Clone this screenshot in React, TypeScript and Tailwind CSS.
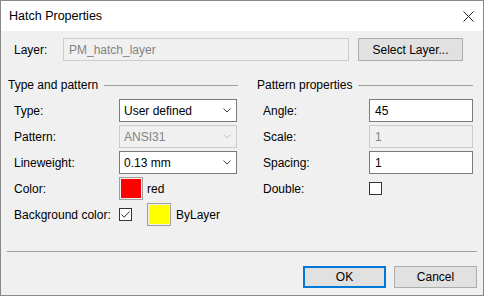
import React from 'react';

const font = { fontFamily: '"Liberation Sans", Arial, sans-serif' };

function Chevron({ disabled }: { disabled?: boolean }) {
  return (
    <svg width="8" height="5" viewBox="0 0 8 5" className="shrink-0">
      <path d="M0.5 0.5 L4 4 L7.5 0.5" fill="none" stroke={disabled ? '#c4c4c4' : '#3c3c3c'} strokeWidth="1" />
    </svg>
  );
}

function Select({ value, disabled }: { value: string; disabled?: boolean }) {
  return (
    <div
      className={`w-[118px] h-[23px] flex items-center justify-between pl-[4px] pr-[5px] border ${
        disabled ? 'border-[#cccccc] bg-[#f0f0f0] text-[#838383]' : 'border-[#7a7a7a] bg-white text-black'
      }`}
    >
      <span>{value}</span>
      <Chevron disabled={disabled} />
    </div>
  );
}

function TextBox({ value, disabled }: { value: string; disabled?: boolean }) {
  return (
    <div
      className={`w-[104px] h-[23px] flex items-center pl-[5px] border ${
        disabled ? 'border-[#cccccc] bg-[#f0f0f0] text-[#838383]' : 'border-[#7a7a7a] bg-white text-black'
      }`}
    >
      {value}
    </div>
  );
}

function CheckBox({ checked }: { checked?: boolean }) {
  return (
    <div className="w-[13px] h-[13px] border border-[#333333] bg-white flex items-center justify-center">
      {checked && (
        <svg width="11" height="11" viewBox="0 0 11 11">
          <path d="M1.5 5.5 L4.2 8.2 L9.5 2.5" fill="none" stroke="#333333" strokeWidth="1" />
        </svg>
      )}
    </div>
  );
}

function Swatch({ color }: { color: string }) {
  return (
    <div className="w-[24px] h-[23px] border border-[#a0a0a0] p-[1px] bg-[#f0f0f0]">
      <div className="w-full h-full" style={{ backgroundColor: color }} />
    </div>
  );
}

function GroupHeader({ title }: { title: string }) {
  return (
    <div className="flex items-center h-[16px]">
      <span className="pr-[6px]">{title}</span>
      <div className="flex-1 h-px bg-[#a0a0a0]" />
    </div>
  );
}

function Row({ label, children, w }: { label: string; children: React.ReactNode; w: string }) {
  return (
    <div className="flex items-center h-[23px]">
      <span className={`${w} pl-[6px] shrink-0`}>{label}</span>
      {children}
    </div>
  );
}

export default function App() {
  return (
    <div style={font} className="w-[484px] h-[296px] text-[12px] text-black">
      <div className="w-[484px] h-[296px] border border-[#888888] bg-[#f0f0f0] flex flex-col">
        {/* Title bar */}
        <div className="h-[30px] bg-white flex items-center justify-between pl-[8px] pr-[9px]">
          <span className="text-[12.5px]">Hatch Properties</span>
          <svg width="11" height="11" viewBox="0 0 11 11">
            <path d="M0.5 0.5 L10.5 10.5 M10.5 0.5 L0.5 10.5" stroke="#222222" strokeWidth="1" />
          </svg>
        </div>

        {/* Layer row */}
        <div className="flex items-center pt-[7px] pl-[13px]">
          <span className="w-[49px]">Layer:</span>
          <div className="w-[286px] h-[23px] border border-[#cccccc] bg-[#f0f0f0] text-[#838383] flex items-center pl-[5px]">
            PM_hatch_layer
          </div>
          <button className="ml-[9px] w-[105px] h-[23px] border border-[#adadad] bg-[#e1e1e1]">Select Layer...</button>
        </div>

        {/* Groups */}
        <div className="flex pt-[16px] pl-[7px]">
          <div className="w-[230px] flex flex-col">
            <GroupHeader title="Type and pattern" />
            <div className="flex flex-col gap-[3px] pt-[6px]">
              <Row label="Type:" w="w-[111px]">
                <Select value="User defined" />
              </Row>
              <Row label="Pattern:" w="w-[111px]">
                <Select value="ANSI31" disabled />
              </Row>
              <Row label="Lineweight:" w="w-[111px]">
                <Select value="0.13 mm" />
              </Row>
              <Row label="Color:" w="w-[111px]">
                <Swatch color="#ff0000" />
                <span className="pl-[4px]">red</span>
              </Row>
              <Row label="Background color:" w="w-[111px]">
                <CheckBox checked />
                <div className="ml-[15px]">
                  <Swatch color="#ffff00" />
                </div>
                <span className="pl-[5px]">ByLayer</span>
              </Row>
            </div>
          </div>

          <div className="w-[216px] ml-[19px] flex flex-col">
            <GroupHeader title="Pattern properties" />
            <div className="flex flex-col gap-[3px] pt-[6px]">
              <Row label="Angle:" w="w-[112px]">
                <TextBox value="45" />
              </Row>
              <Row label="Scale:" w="w-[112px]">
                <TextBox value="1" disabled />
              </Row>
              <Row label="Spacing:" w="w-[112px]">
                <TextBox value="1" />
              </Row>
              <Row label="Double:" w="w-[112px]">
                <CheckBox />
              </Row>
            </div>
          </div>
        </div>

        {/* Separator */}
        <div className="mx-[6px] mt-[25px] h-px bg-[#a0a0a0]" />

        {/* Buttons */}
        <div className="flex justify-end gap-[8px] pt-[14px] pr-[6px]">
          <button className="w-[83px] h-[22px] border-2 border-[#0078d7] bg-[#e1e1e1]">OK</button>
          <button className="w-[83px] h-[22px] border border-[#adadad] bg-[#e1e1e1]">Cancel</button>
        </div>
      </div>
    </div>
  );
}
